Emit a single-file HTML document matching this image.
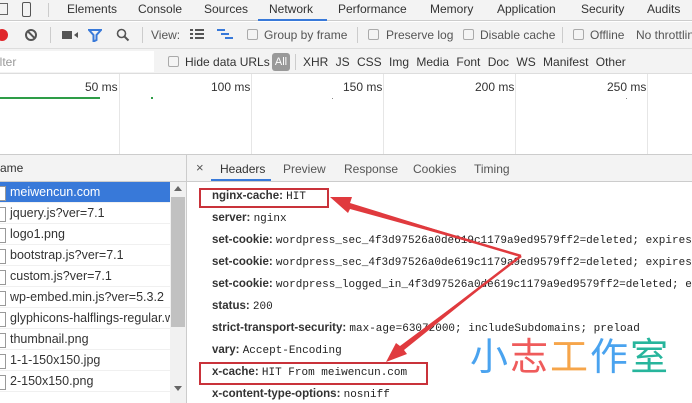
<!DOCTYPE html>
<html><head><meta charset="utf-8"><style>
*{margin:0;padding:0;box-sizing:border-box}
body{width:692px;height:403px;overflow:hidden;background:#fff;font-family:"Liberation Sans",sans-serif;font-size:12px;color:#333;position:relative}
.a{position:absolute;white-space:nowrap}
.cb{position:absolute;width:11px;height:11px;border:1px solid #aaa;border-radius:2px;background:#f4f4f4}
.h{position:absolute;left:212px;font-size:11.5px;white-space:nowrap;color:#222}
.h b{font-weight:bold;color:#333}
.h span{font-family:"Liberation Mono",monospace;font-size:11px}
.row{position:absolute;left:0;width:170px;height:21px;font-size:12.5px;color:#333;padding-left:10px;line-height:21px;border-bottom:1px solid #f0f0f0;white-space:nowrap;overflow:hidden}
.row:before{content:"";position:absolute;left:-2px;top:4px;width:6px;height:13px;border:1px solid #999;background:#fff}
</style></head><body>
<div class="a" style="left:0;top:0;width:692px;height:21px;background:#f3f3f3;border-bottom:1px solid #ccc"></div>
<div class="a" style="left:0;top:3px;width:8px;height:12px;border:1px solid #666;border-left:none"></div>
<div class="a" style="left:22px;top:2px;width:9px;height:15px;border:1.5px solid #555;border-radius:2px"></div>
<div class="a" style="left:48px;top:3px;width:1px;height:14px;background:#ccc"></div>
<div class="a" style="top:2px;left:67px;color:#333">Elements</div>
<div class="a" style="top:2px;left:138px;color:#333">Console</div>
<div class="a" style="top:2px;left:204px;color:#333">Sources</div>
<div class="a" style="top:2px;left:269px;color:#333">Network</div>
<div class="a" style="left:258px;top:19px;width:69px;height:2px;background:#3879d9"></div>
<div class="a" style="top:2px;left:338px;color:#333">Performance</div>
<div class="a" style="top:2px;left:430px;color:#333">Memory</div>
<div class="a" style="top:2px;left:497px;color:#333">Application</div>
<div class="a" style="top:2px;left:581px;color:#333">Security</div>
<div class="a" style="top:2px;left:647px;color:#333">Audits</div>
<div class="a" style="left:0;top:22px;width:692px;height:27px;background:#f3f3f3;border-bottom:1px solid #ddd"></div>
<div class="a" style="left:-4px;top:29px;width:12px;height:12px;border-radius:50%;background:#e0262b"></div>
<div class="a" style="left:25px;top:29px;width:12px;height:12px;border-radius:50%;border:2px solid #555"></div>
<div class="a" style="left:27px;top:34px;width:9px;height:2px;background:#555;transform:rotate(45deg)"></div>
<div class="a" style="left:50px;top:27px;width:1px;height:16px;background:#ccc"></div>
<div class="a" style="left:62px;top:31px;width:10px;height:8px;background:#555"></div>
<div class="a" style="left:71px;top:32px;width:0;height:0;border:3px solid transparent;border-right:4px solid #555"></div>
<svg class="a" style="left:88px;top:28px" width="14" height="14"><path d="M1 2h12l-4.5 5v5l-3 1.5V7z" fill="none" stroke="#3879d9" stroke-width="2"/></svg>
<svg class="a" style="left:116px;top:28px" width="14" height="14"><circle cx="5.5" cy="5.5" r="4" fill="none" stroke="#555" stroke-width="1.6"/><path d="M8.5 8.5l4 4" stroke="#555" stroke-width="2"/></svg>
<div class="a" style="left:142px;top:27px;width:1px;height:16px;background:#ccc"></div>
<div class="a" style="left:151px;top:28px;color:#555">View:</div>
<svg class="a" style="left:190px;top:29px" width="14" height="12"><path d="M0 1h3M5 1h9M0 5h3M5 5h9M0 9h3M5 9h9" stroke="#555" stroke-width="2"/></svg>
<svg class="a" style="left:217px;top:29px" width="16" height="12"><path d="M0 1h8M4 5h8M8 9h8" stroke="#3879d9" stroke-width="2"/></svg>
<div class="cb" style="left:247px;top:29px"></div>
<div class="a" style="left:264px;top:28px;color:#555">Group by frame</div>
<div class="a" style="left:357px;top:27px;width:1px;height:16px;background:#ccc"></div>
<div class="cb" style="left:368px;top:29px"></div>
<div class="a" style="left:386px;top:28px;color:#555">Preserve log</div>
<div class="cb" style="left:463px;top:29px"></div>
<div class="a" style="left:480px;top:28px;color:#555">Disable cache</div>
<div class="a" style="left:562px;top:27px;width:1px;height:16px;background:#ccc"></div>
<div class="cb" style="left:573px;top:29px"></div>
<div class="a" style="left:590px;top:28px;color:#555">Offline</div>
<div class="a" style="left:636px;top:28px;color:#555">No throttling</div>
<div class="a" style="left:0;top:49px;width:692px;height:25px;background:#f3f3f3;border-bottom:1px solid #ddd"></div>
<div class="a" style="left:0;top:51px;width:154px;height:21px;background:#fff"></div>
<div class="a" style="left:-3px;top:55px;color:#999">ilter</div>
<div class="cb" style="left:168px;top:56px"></div>
<div class="a" style="left:185px;top:55px;color:#333">Hide data URLs</div>
<div class="a" style="left:272px;top:53px;width:18px;height:18px;border-radius:3px;background:#999;color:#fff;font-size:11px;line-height:18px;text-align:center">All</div>
<div class="a" style="left:295px;top:54px;width:1px;height:16px;background:#ccc"></div>
<div class="a" style="left:303px;top:55px;color:#333;word-spacing:4px">XHR JS CSS Img Media Font Doc WS Manifest Other</div>
<div class="a" style="left:119px;top:74px;width:1px;height:80px;background:#e6e6e6"></div>
<div class="a" style="left:251px;top:74px;width:1px;height:80px;background:#e6e6e6"></div>
<div class="a" style="left:383px;top:74px;width:1px;height:80px;background:#e6e6e6"></div>
<div class="a" style="left:515px;top:74px;width:1px;height:80px;background:#e6e6e6"></div>
<div class="a" style="left:647px;top:74px;width:1px;height:80px;background:#e6e6e6"></div>
<div class="a" style="left:85px;top:80px;color:#333">50 ms</div>
<div class="a" style="left:211px;top:80px;color:#333">100 ms</div>
<div class="a" style="left:343px;top:80px;color:#333">150 ms</div>
<div class="a" style="left:475px;top:80px;color:#333">200 ms</div>
<div class="a" style="left:607px;top:80px;color:#333">250 ms</div>
<div class="a" style="left:0;top:97px;width:100px;height:2px;background:#2e9d47"></div>
<div class="a" style="left:151px;top:97px;width:2px;height:2px;background:#2e9d47"></div>
<div class="a" style="left:332px;top:98px;width:1px;height:1px;background:#888"></div>
<div class="a" style="left:626px;top:98px;width:1px;height:1px;background:#888"></div>
<div class="a" style="left:0;top:154px;width:692px;height:1px;background:#ccc"></div>
<div class="a" style="left:0;top:155px;width:187px;height:27px;background:#f3f3f3;border-bottom:1px solid #ccc"></div>
<div class="a" style="left:0;top:161px;color:#333">ame</div>
<div class="a" style="left:186px;top:155px;width:1px;height:248px;background:#ccc"></div>
<div class="a" style="left:187px;top:155px;width:505px;height:27px;background:#f3f3f3;border-bottom:1px solid #ccc"></div>
<div class="a" style="left:196px;top:160px;color:#555;font-size:13px">×</div>
<div class="a" style="left:220px;top:162px;color:#333">Headers</div>
<div class="a" style="left:211px;top:179px;width:60px;height:2px;background:#3879d9"></div>
<div class="a" style="left:283px;top:162px;color:#555">Preview</div>
<div class="a" style="left:344px;top:162px;color:#555">Response</div>
<div class="a" style="left:413px;top:162px;color:#555">Cookies</div>
<div class="a" style="left:474px;top:162px;color:#555">Timing</div>
<div class="row" style="top:182px;background:#3879d9;color:#fff">meiwencun.com</div>
<div class="row" style="top:203px">jquery.js?ver=7.1</div>
<div class="row" style="top:224px">logo1.png</div>
<div class="row" style="top:245px">bootstrap.js?ver=7.1</div>
<div class="row" style="top:266px">custom.js?ver=7.1</div>
<div class="row" style="top:287px">wp-embed.min.js?ver=5.3.2</div>
<div class="row" style="top:308px">glyphicons-halflings-regular.woff</div>
<div class="row" style="top:329px">thumbnail.png</div>
<div class="row" style="top:350px">1-1-150x150.jpg</div>
<div class="row" style="top:371px">2-150x150.png</div>
<div class="a" style="left:170px;top:182px;width:16px;height:221px;background:#f1f1f1"></div>
<div class="a" style="left:171px;top:197px;width:14px;height:130px;background:#c1c1c1"></div>
<div class="a" style="left:174px;top:186px;border:4px solid transparent;border-bottom:5px solid #666;border-top:none"></div>
<div class="a" style="left:174px;top:386px;border:4px solid transparent;border-top:5px solid #666;border-bottom:none"></div>
<div class="h" style="top:190px"><b>nginx-cache:</b> <span>HIT</span></div>
<div class="h" style="top:212px"><b>server:</b> <span>nginx</span></div>
<div class="h" style="top:234px"><b>set-cookie:</b> <span>wordpress_sec_4f3d97526a0de619c1179a9ed9579ff2=deleted; expires</span></div>
<div class="h" style="top:256px"><b>set-cookie:</b> <span>wordpress_sec_4f3d97526a0de619c1179a9ed9579ff2=deleted; expires</span></div>
<div class="h" style="top:278px"><b>set-cookie:</b> <span>wordpress_logged_in_4f3d97526a0de619c1179a9ed9579ff2=deleted; e</span></div>
<div class="h" style="top:300px"><b>status:</b> <span>200</span></div>
<div class="h" style="top:322px"><b>strict-transport-security:</b> <span>max-age=63072000; includeSubdomains; preload</span></div>
<div class="h" style="top:344px"><b>vary:</b> <span>Accept-Encoding</span></div>
<div class="h" style="top:366px"><b>x-cache:</b> <span>HIT From meiwencun.com</span></div>
<div class="h" style="top:388px"><b>x-content-type-options:</b> <span>nosniff</span></div>
<div class="a" style="left:199px;top:188px;width:130px;height:20px;border:2.5px solid #c9323a"></div>
<div class="a" style="left:199px;top:362px;width:229px;height:23px;border:2.5px solid #c9323a"></div>
<svg class="a" style="left:0;top:0" width="692" height="403">
<path d="M521 256L350 209L348 213L330 197L352 197L350 203Z" fill="#e03a3e"/>
<path d="M521 256L404 350L407 354L386 362L396 343L400 346Z" fill="#e03a3e"/>
<path d="M521 256L348 205" stroke="#e03a3e" stroke-width="2.5"/>
<path d="M521 256L401 348" stroke="#e03a3e" stroke-width="2.5"/>
</svg>
<div class="a" style="left:470px;top:326px;font-family:'Liberation Sans','Noto Sans CJK SC',sans-serif;font-size:38px;letter-spacing:2px"><span style="color:#4aa3ef">小</span><span style="color:#ef5b5b">志</span><span style="color:#f6a54a">工</span><span style="color:#4aa3ef">作</span><span style="color:#27b59c">室</span></div>
</body></html>
